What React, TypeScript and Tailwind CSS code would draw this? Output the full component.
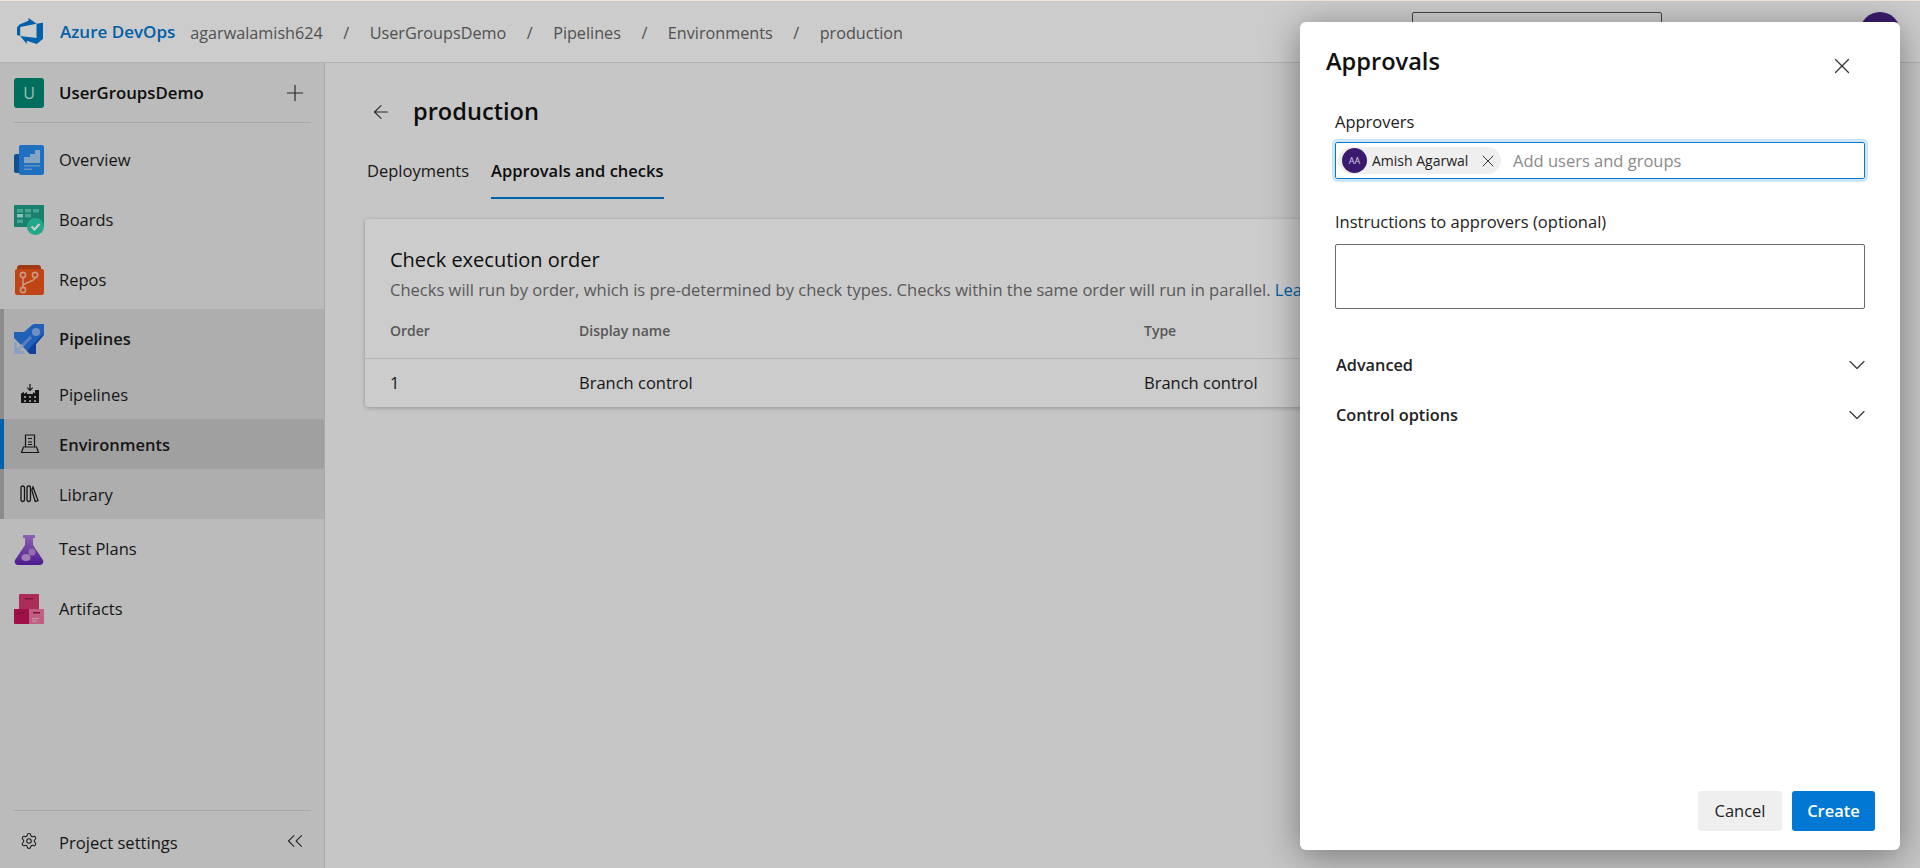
import { ArrowLeft, ChevronDown, ChevronsLeft, Plus, Settings, X } from 'lucide-react';
import type { ReactNode } from 'react';

const AzureLogo = () => (
  <svg width="26" height="26" viewBox="0 0 24 24" fill="#0078d4">
    <path d="M0 8.877L2.247 5.91l8.405-3.416V.022l7.37 5.393L2.966 8.338v8.225L0 15.707zm24-4.45v14.651l-5.753 4.9-9.303-3.057v3.056l-5.978-7.416 15.057 1.798V5.415z" />
  </svg>
);

const OverviewIcon = () => (
  <svg width="30" height="30" viewBox="0 0 30 30">
    <path d="M0 11a2 2 0 0 1 2-2h6v19H2a2 2 0 0 1-2-2z" fill="#1464b4" />
    <path d="M5 2a2 2 0 0 1 2-2h21a2 2 0 0 1 2 2v26a2 2 0 0 1-2 2H7a2 2 0 0 1-2-2z" fill="#288cf0" />
    <path d="M10 12h6V9h5V5h5v13H10z" fill="#a4cdf5" />
    <path d="M10 20h16v1.6H10zM10 23.5h8v1.6h-8z" fill="#7fb8f0" />
  </svg>
);

const BoardsIcon = () => (
  <svg width="30" height="30" viewBox="0 0 30 30">
    <path d="M0 0h30v22H0z" fill="#20a08c" />
    <path d="M3 4h6v3.500H3zM11 4h6v3.500h-6zM19 4h6v3.500h-6z" fill="#5ccdb4" />
    <path d="M3 9h6v3.500H3z" fill="#b4efe0" />
    <path d="M11 9h6v3.500h-6z" fill="#5ccdb4" />
    <path d="M3 14.500h6V18H3z" fill="#5ccdb4" />
    <circle cx="21.500" cy="21.500" r="8.500" fill="#28d2aa" />
    <path d="M17.500 21.500l3 3 5-5.500" fill="none" stroke="#fff" strokeWidth="2.200" />
  </svg>
);

const ReposIcon = () => (
  <svg width="30" height="30" viewBox="0 0 30 30">
    <path d="M3 3a3 3 0 0 1 3-3h18a3 3 0 0 1 3 3v3H3z" fill="#c8481a" />
    <path d="M1 6a2 2 0 0 1 2-2h25a2 2 0 0 1 2 2v22a2 2 0 0 1-2 2H3a2 2 0 0 1-2-2z" fill="#f05519" />
    <g fill="none" stroke="#f8c0a8" strokeWidth="1.600">
      <circle cx="9" cy="10" r="2.600" />
      <circle cx="21" cy="10" r="2.600" />
      <circle cx="9" cy="25" r="2.600" />
      <path d="M9 12.600v9.800M21 12.600c0 5-12 4-12 9" />
    </g>
  </svg>
);

const RocketIcon = () => (
  <svg width="30" height="30" viewBox="0 0 30 30">
    <path d="M0 8h10L18 1q1-1 3-1h9v9q0 2-1 3l-7 8v10H16L0 14z" fill="#2a78e6" />
    <path d="M30 9q0 2-1 3l-7 8v10H16l-3-3z" fill="#1250c4" />
    <circle cx="22" cy="8" r="4" fill="#8cb6f0" />
    <path d="M9 21l8-8" stroke="#6ea2ec" strokeWidth="3" fill="none" />
    <path d="M1.500 18v10.500h9M3 27l6-6" stroke="#afc6f2" strokeWidth="3" fill="none" />
  </svg>
);

const FlaskIcon = () => (
  <svg width="30" height="30" viewBox="0 0 30 30">
    <defs>
      <linearGradient id="flask" x1="0" y1="0" x2="0" y2="1">
        <stop offset="0" stopColor="#b07ce0" />
        <stop offset="1" stopColor="#6221b4" />
      </linearGradient>
    </defs>
    <path d="M9 0h12v3h-2v7l10 15c1 2-.4 5-3 5H4c-2.600 0-4-3-3-5l10-15V3H9z" fill="url(#flask)" />
    <ellipse cx="12" cy="22.500" rx="4.500" ry="3.500" fill="#c79ee0" />
    <circle cx="18" cy="17" r="3.500" fill="#b78ad6" />
  </svg>
);

const ArtifactsIcon = () => (
  <svg width="30" height="30" viewBox="0 0 30 30">
    <path d="M5 1a1 1 0 0 1 1-1h19v15H5z" fill="#d6386f" />
    <path d="M0 15h15v15H1a1 1 0 0 1-1-1z" fill="#c8145a" />
    <path d="M15 15h15v14a1 1 0 0 1-1 1H15z" fill="#f077a5" />
    <path d="M11 4h8v1.500h-8zM4 18h7v1.500H4zM19 18h7v1.500h-7z" fill="#a01648" />
    <path d="M18 24h7v1.200h-7zM18 26.500h5v1.200h-5z" fill="#f8b4ca" />
  </svg>
);

const SubPipelinesIcon = () => (
  <svg width="20" height="20" viewBox="0 0 20 20" fill="#1b1b1b">
    <path d="M1 9.500l3-1.500v2l3-2v2h6V8l2 1.500V6h4v13H1z" />
    <path d="M9.400 0h1.200v5l1.700-1.700.8.800L10 7.200 6.900 4.100l.8-.8L9.400 5z" />
    <path d="M4 12h2v2H4zM9 12h2v2H9zM14 12h2v2h-2zM4 16h2v2H4zM9 16h2v2H9zM14 16h2v2h-2z" fill="#b0b0b0" />
  </svg>
);

const EnvironmentsIcon = () => (
  <svg width="20" height="20" viewBox="0 0 20 20" fill="none" stroke="#1b1b1b" strokeWidth="1.200">
    <path d="M5.500 13V1h9v12M3.500 13h13l2 5.500H1.500z" />
    <path d="M8 4.500h4M8 8h4M8 10.500h4" />
  </svg>
);

const LibraryIcon = () => (
  <svg width="20" height="20" viewBox="0 0 20 20" fill="none" stroke="#1b1b1b" strokeWidth="1.300">
    <rect x="1" y="2" width="3.500" height="15.500" rx="1.750" />
    <rect x="7" y="2" width="3.500" height="15.500" rx="1.750" />
    <path d="M13 3l5 13.500-2.800 1L11.800 6z" />
  </svg>
);

const NavItem = ({ icon, label, bold }: { icon: ReactNode; label: string; bold?: boolean }) => (
  <div className="flex h-full items-center pl-[14px]">
    <div className="flex w-[30px] justify-center">{icon}</div>
    <span className={`ml-[15px] text-[16.5px] text-[#1c1c1c] ${bold ? 'font-semibold' : ''}`}>{label}</span>
  </div>
);

const SubItem = ({ icon, label, selected }: { icon: ReactNode; label: string; selected?: boolean }) => (
  <div
    className={`flex h-[50px] items-center border-l-4 pl-[16px] ${
      selected ? 'rounded-r-[3px] border-[#0078d4] bg-[#c9c9c9]' : 'border-[#b0b0b0]'
    }`}
  >
    <div className="flex w-[30px] justify-start">{icon}</div>
    <span className={`ml-[9px] pt-[2px] text-[16.5px] text-[#1c1c1c] ${selected ? 'font-semibold' : ''}`}>{label}</span>
  </div>
);

const Sidebar = () => (
  <aside className="flex w-[325px] flex-none flex-col border-r border-[#d0d0d0] bg-[#eaeaea]">
    <div className="mx-[13px] flex h-[60px] flex-none items-center border-b border-[#d2d2d2]">
      <div className="ml-px flex size-[30px] items-center justify-center rounded-[3px] bg-[#008a73] text-[16px] text-[#cfe8e2]">U</div>
      <span className="ml-[15px] text-[16.8px] font-semibold text-[#111]">UserGroupsDemo</span>
      <Plus className="ml-auto mr-[3px] size-[26px] text-[#333]" strokeWidth={1.1} />
    </div>
    <div className="mt-[7px] h-[60px]"><NavItem icon={<OverviewIcon />} label="Overview" /></div>
    <div className="h-[60px]"><NavItem icon={<BoardsIcon />} label="Boards" /></div>
    <div className="h-[59px] pt-px"><NavItem icon={<ReposIcon />} label="Repos" /></div>
    <div className="bg-[#dadada]">
      <div className="h-[60px] border-l-4 border-[#b0b0b0] pl-0">
        <div className="-ml-1 h-full"><NavItem icon={<RocketIcon />} label="Pipelines" bold /></div>
      </div>
      <SubItem icon={<SubPipelinesIcon />} label="Pipelines" />
      <SubItem icon={<EnvironmentsIcon />} label="Environments" selected />
      <SubItem icon={<LibraryIcon />} label="Library" />
    </div>
    <div className="h-[61px]"><NavItem icon={<FlaskIcon />} label="Test Plans" /></div>
    <div className="h-[58px]"><NavItem icon={<ArtifactsIcon />} label="Artifacts" /></div>
    <div className="mx-[13px] mt-auto flex h-[58px] flex-none items-center border-t border-[#d2d2d2] pl-[7px] pt-[8px]">
      <Settings className="-mt-[5px] size-[18px] text-[#222]" strokeWidth={1.4} />
      <span className="ml-[21px] text-[16.6px] text-[#1c1c1c]">Project settings</span>
      <ChevronsLeft className="-mt-[6px] ml-auto mr-[3px] size-[26px] text-[#333]" strokeWidth={1} />
    </div>
  </aside>
);

const Breadcrumb = ({ label }: { label: string }) => (
  <>
    <span className="mt-[4px] text-[16.2px] text-[#666]">/</span>
    <span className="mt-[4px] text-[16.2px] text-[#666]">{label}</span>
  </>
);

const CheckCard = () => (
  <section className="mt-[20px] h-[188px] rounded-[3px] bg-white pt-[27px] shadow-[0_1px_4px_rgba(0,0,0,0.25)]">
    <h2 className="px-[25px] text-[20px] leading-[28px] text-[#111]">Check execution order</h2>
    <p className="mt-[4px] whitespace-nowrap px-[25px] text-[16.55px] leading-[24px] text-[#707070]">
      Checks will run by order, which is pre-determined by check types. Checks within the same order will run in parallel.{' '}
      <span className="text-[#0078d4]">Learn more</span>
    </p>
    <div className="grid h-[57px] grid-cols-[189px_565px_1fr] items-center border-b border-[#e2e2e2] px-[25px] pt-[1px] text-[14px] font-semibold text-[#6e6e6e]">
      <span>Order</span>
      <span>Display name</span>
      <span>Type</span>
    </div>
    <div className="grid h-[48px] grid-cols-[189px_565px_1fr] items-center px-[25px] text-[16.5px] text-[#1c1c1c]">
      <span>1</span>
      <span>Branch control</span>
      <span>Branch control</span>
    </div>
  </section>
);

const ApprovalsDialog = () => (
  <div className="absolute bottom-[18px] right-[20px] top-[22px] flex w-[600px] flex-col rounded-[6px] bg-white pl-[35px] pr-[35px] shadow-[0_6px_36px_rgba(0,0,0,0.4)]">
    <div className="-ml-[9px] mt-[21px] flex h-[38px] items-start justify-between">
      <h1 className="text-[23.6px] font-semibold leading-[36px] text-[#111]">Approvals</h1>
      <X className="mr-[10px] mt-[10px] size-[26px] text-[#333]" strokeWidth={1.1} />
    </div>
    <label className="mt-[29px] text-[16.5px] leading-[24px] text-[#222]">Approvers</label>
    <div className="mt-[8px] flex h-[37px] items-center rounded-[2px] border border-[#0078d4] pl-[2px] outline-[3px] outline-[#cfe6f8]">
      <div className="flex h-[27px] w-[163px] items-center rounded-full bg-[#efefef] pl-[4px]">
        <div className="flex size-[25px] flex-none items-center justify-center rounded-full bg-[#3a1a6e] text-[9px] text-[#d8cfe6]">AA</div>
        <span className="ml-[5px] whitespace-nowrap text-[14px] text-[#222]">Amish Agarwal</span>
        <X className="ml-[10px] size-[20px] flex-none text-[#333]" strokeWidth={1.200} />
      </div>
      <span className="ml-[12px] mt-[2px] text-[16.5px] text-[#8a8a8a]">Add users and groups</span>
    </div>
    <label className="mt-[31px] text-[16.5px] leading-[24px] text-[#222]">Instructions to approvers (optional)</label>
    <div className="mt-[10px] h-[65px] rounded-[2px] border border-[#6b6b6b]" />
    <div className="mt-[44px] flex h-[24px] items-center justify-between pl-px">
      <span className="text-[16.3px] font-semibold leading-[24px] text-[#222]">Advanced</span>
      <ChevronDown className="-mr-[6px] size-[28px] text-[#333]" strokeWidth={1} />
    </div>
    <div className="mt-[26px] flex h-[24px] items-center justify-between pl-px">
      <span className="text-[16.3px] font-semibold leading-[24px] text-[#222]">Control options</span>
      <ChevronDown className="-mr-[6px] size-[28px] text-[#333]" strokeWidth={1} />
    </div>
    <div className="mb-[19px] -mr-[10px] mt-auto flex justify-end gap-[10px]">
      <button className="h-[40px] w-[84px] rounded-[3px] bg-[#efefef] text-[16.5px] text-[#222]">Cancel</button>
      <button className="h-[40px] w-[83px] rounded-[3px] bg-[#0078d4] text-[16.5px] font-semibold text-white">Create</button>
    </div>
  </div>
);

export default function App() {
  return (
    <div className="relative flex h-screen w-full flex-col overflow-hidden bg-[#f8f8f8] font-['Open_Sans',sans-serif]">
      <header className="flex h-[63px] flex-none items-center gap-[20.5px] border-b border-[#dcdcdc] bg-white pl-[17px]">
        <div className="flex items-center gap-[18px]">
          <AzureLogo />
          <span className="-ml-[1px] mt-[2px] text-[17px] font-semibold text-[#0078d4]">Azure DevOps</span>
        </div>
        <span className="-ml-[5.5px] mt-[4px] text-[16.2px] text-[#666]">agarwalamish624</span>
        <Breadcrumb label="UserGroupsDemo" />
        <Breadcrumb label="Pipelines" />
        <Breadcrumb label="Environments" />
        <Breadcrumb label="production" />
        <div className="ml-auto mr-[20px] flex items-center gap-[198px] self-start pt-[12px]">
          <div className="h-[40px] w-[250px] rounded-[2px] border border-[#555]" />
          <div className="size-[40px] rounded-full bg-[#4a2288]" />
        </div>
      </header>
      <div className="flex min-h-0 flex-1">
        <Sidebar />
        <main className="min-w-0 flex-1 pl-[40px] pr-[30px]">
          <div className="mt-[33px] flex h-[32px] items-center">
            <ArrowLeft className="ml-[5px] size-[22px] text-[#333]" strokeWidth={1.2} />
            <h1 className="ml-[21px] text-[23.6px] font-semibold text-[#111]">production</h1>
          </div>
          <div className="mt-[22px] flex h-[49px] items-start gap-[22px] pl-[2px] text-[16.5px] text-[#222]">
            <span className="pt-[9px]">Deployments</span>
            <span className="h-[49px] border-b-2 border-[#0078d4] pt-[9px] font-semibold text-[#111]">Approvals and checks</span>
          </div>
          <CheckCard />
        </main>
      </div>
      <div className="absolute inset-0 bg-black/20" />
      <div className="absolute inset-x-0 top-0 h-px bg-[#f3e3df]" />
      <ApprovalsDialog />
    </div>
  );
}
